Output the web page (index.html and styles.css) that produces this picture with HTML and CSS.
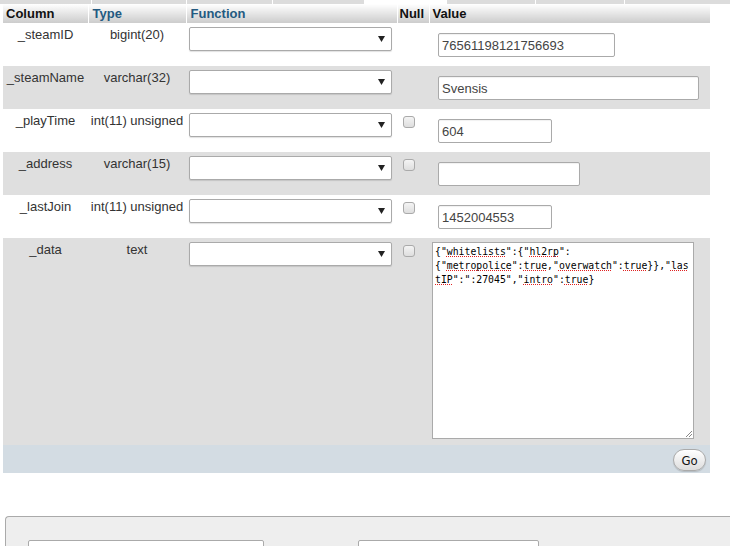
FILE: index.html
```html
<!DOCTYPE html>
<html>
<head>
<meta charset="utf-8">
<link rel="stylesheet" href="styles.css">
</head>
<body>
<div class="tabs">
  <span class="tab t1"></span><span class="tab t2"></span><span class="tab t3"></span><span class="tab t4"></span><span class="tab gap"></span><span class="tab t6"></span><span class="tab t7"></span><span class="tab t8"></span>
</div>
<table class="insert">
  <colgroup>
    <col class="c-col"><col class="c-type"><col class="c-func"><col class="c-null"><col class="c-val">
  </colgroup>
  <thead>
    <tr>
      <th class="h-col">Column</th>
      <th class="h-link">Type</th>
      <th class="h-link">Function</th>
      <th class="h-null">Null</th>
      <th class="h-val">Value</th>
    </tr>
  </thead>
  <tbody>
    <tr class="odd">
      <td class="name">_steamID</td>
      <td class="type">bigint(20)</td>
      <td class="func"><div class="select"><svg class="arrow" width="7" height="6" viewBox="0 0 7 6"><path d="M0 0H7L3.5 6Z" fill="#222"/></svg></div></td>
      <td class="null"></td>
      <td class="val"><input class="field w177" type="text" value="76561198121756693"></td>
    </tr>
    <tr class="even">
      <td class="name">_steamName</td>
      <td class="type">varchar(32)</td>
      <td class="func"><div class="select"><svg class="arrow" width="7" height="6" viewBox="0 0 7 6"><path d="M0 0H7L3.5 6Z" fill="#222"/></svg></div></td>
      <td class="null"></td>
      <td class="val"><input class="field w261" type="text" value="Svensis"></td>
    </tr>
    <tr class="odd">
      <td class="name">_playTime</td>
      <td class="type">int(11) unsigned</td>
      <td class="func"><div class="select"><svg class="arrow" width="7" height="6" viewBox="0 0 7 6"><path d="M0 0H7L3.5 6Z" fill="#222"/></svg></div></td>
      <td class="null"><span class="check"></span></td>
      <td class="val"><input class="field w114" type="text" value="604"></td>
    </tr>
    <tr class="even">
      <td class="name">_address</td>
      <td class="type">varchar(15)</td>
      <td class="func"><div class="select"><svg class="arrow" width="7" height="6" viewBox="0 0 7 6"><path d="M0 0H7L3.5 6Z" fill="#222"/></svg></div></td>
      <td class="null"><span class="check"></span></td>
      <td class="val"><input class="field w142" type="text" value=""></td>
    </tr>
    <tr class="odd">
      <td class="name">_lastJoin</td>
      <td class="type">int(11) unsigned</td>
      <td class="func"><div class="select"><svg class="arrow" width="7" height="6" viewBox="0 0 7 6"><path d="M0 0H7L3.5 6Z" fill="#222"/></svg></div></td>
      <td class="null"><span class="check"></span></td>
      <td class="val"><input class="field w114" type="text" value="1452004553"></td>
    </tr>
    <tr class="even tall">
      <td class="name">_data</td>
      <td class="type">text</td>
      <td class="func"><div class="select"><svg class="arrow" width="7" height="6" viewBox="0 0 7 6"><path d="M0 0H7L3.5 6Z" fill="#222"/></svg></div></td>
      <td class="null"><span class="check"></span></td>
      <td class="val area-cell">
        <div class="area">{"<span class="sp">whitelists</span>":{"<span class="sp">hl2rp</span>":{"<span class="sp">metropolice</span>":<span class="sp">true</span>,"<span class="sp">overwatch</span>":<span class="sp">true</span>}},"<span class="sp">lastIP</span>":":27045","<span class="sp">intro</span>":<span class="sp">true</span>}<svg class="grip" width="7" height="7" viewBox="0 0 7 7"><path d="M7 1L1 7M7 4L4 7" stroke="#888" stroke-width="1"/></svg></div>
      </td>
    </tr>
  </tbody>
  <tfoot>
    <tr>
      <td colspan="5" class="foot"><button class="go" type="button">Go</button></td>
    </tr>
  </tfoot>
</table>
<div class="panel">
  <div class="pbox b1"></div>
  <div class="pbox b2"></div>
</div>
</body>
</html>
```

FILE: styles.css
```css
html, body {
  margin: 0;
  padding: 0;
  background: #fff;
  font-family: "Liberation Sans", Arial, sans-serif;
  font-size: 13px;
  color: #333;
  overflow: hidden;
}

.tabs {
  display: flex;
  height: 4px;
  gap: 1px;
}
.tab { background: #dcdcdc; height: 4px; }
.t1 { width: 91px; }
.t2 { width: 94px; }
.t3 { width: 85px; }
.t4 { width: 91px; }
.gap { width: 81px; background: #fff; }
.t6 { width: 88px; }
.t7 { width: 88px; }
.t8 { flex: 1; }

.insert {
  margin-left: 3px;
  width: 707px;
  table-layout: fixed;
  border-collapse: collapse;
  border-spacing: 0;
}
.c-col { width: 85px; }
.c-type { width: 98px; }
.c-func { width: 211px; }
.c-null { width: 32px; }
.c-val { width: 281px; }

thead tr { height: 19px; }
th {
  background: linear-gradient(#ffffff, #cccccc);
  font-weight: bold;
  text-align: left;
  padding: 0 4px;
  line-height: 19px;
  height: 19px;
  border-right: 1px solid #fff;
  white-space: nowrap;
  overflow: hidden;
}
th.h-col { color: #111; padding-left: 3px; }
th.h-link { color: #235a81; }
th.h-null { color: #111; padding-left: 2px; }
th.h-val { color: #111; padding-left: 3px; border-right: none; }

tbody tr { height: 43px; }
tbody tr.tall { height: 207px; }
tr.odd td { background: #fff; }
tr.even td { background: #dfdfdf; }

td {
  vertical-align: top;
  padding: 0;
}
td.name, td.type {
  text-align: center;
  padding-top: 4px;
  line-height: 15px;
  white-space: nowrap;
  color: #333;
}
td.func { padding: 4px 0 0 3px; }
td.null { padding: 7px 0 0 6px; }
td.val { padding: 4px 0 0 3px; }

.select {
  box-sizing: border-box;
  width: 203px;
  height: 24px;
  background: #fff;
  border: 1px solid #aaa;
  border-radius: 2px;
  box-shadow: 0 1px 1px rgba(0,0,0,0.12);
  display: flex;
  align-items: center;
  justify-content: flex-end;
  padding-right: 6px;
}
.arrow { display: block; }

.check {
  display: block;
  box-sizing: border-box;
  width: 12px;
  height: 12px;
  border: 1px solid #aaa;
  border-radius: 3px;
  background: linear-gradient(#f4f4f4, #dedede);
}

.field {
  display: block;
  box-sizing: border-box;
  height: 24px;
  margin: 6px 0 0 6px;
  padding: 0 3px;
  border: 1px solid #aaa;
  border-radius: 2px;
  background: #fff;
  font-family: "Liberation Sans", Arial, sans-serif;
  font-size: 13px;
  color: #444;
  box-shadow: inset 0 1px 1px rgba(0,0,0,0.06);
  outline: none;
}
.w177 { width: 177px; }
.w261 { width: 261px; }
.w114 { width: 114px; }
.w142 { width: 142px; }

.area {
  position: relative;
  box-sizing: border-box;
  width: 262px;
  height: 197px;
  border: 1px solid #aaa;
  background: #fff;
  padding: 2px 2px;
  font-family: "DejaVu Sans Mono", "Liberation Mono", monospace;
  font-size: 9.8px;
  line-height: 14px;
  color: #000;
  white-space: pre-wrap;
  overflow-wrap: anywhere;
  word-break: normal;
}
.sp {
  text-decoration-line: underline;
  text-decoration-style: dotted;
  text-decoration-color: #e02020;
  text-decoration-thickness: 1px;
  text-underline-offset: 1px;
  text-decoration-skip-ink: none;
}
.grip {
  position: absolute;
  right: 1px;
  bottom: 1px;
}

td.foot {
  background: #d3dce3;
  height: 24px;
  text-align: right;
  vertical-align: top;
  padding: 4px 4px 0 0;
}
.go {
  display: inline-block;
  vertical-align: top;
  box-sizing: border-box;
  height: 22px;
  width: 33px;
  padding: 0;
  border: 1px solid #aaa;
  border-radius: 11px;
  background: linear-gradient(#ffffff, #dddddd);
  font-family: "DejaVu Sans Condensed", "Liberation Sans", sans-serif;
  font-size: 13px;
  color: #111;
  box-shadow: 0 1px 1px rgba(0,0,0,0.15);
}

.panel {
  margin: 43px 0 0 5px;
  border: 1px solid #aaa;
  border-right: none;
  border-radius: 4px 0 0 0;
  background: #eee;
  height: 80px;
  padding: 23px 0 0 22px;
  display: flex;
  gap: 94px;
}
.pbox {
  height: 40px;
  background: #fff;
  border: 1px solid #aaa;
  border-radius: 2px;
  box-sizing: border-box;
}
.b1 { width: 236px; }
.b2 { width: 181px; }
```
